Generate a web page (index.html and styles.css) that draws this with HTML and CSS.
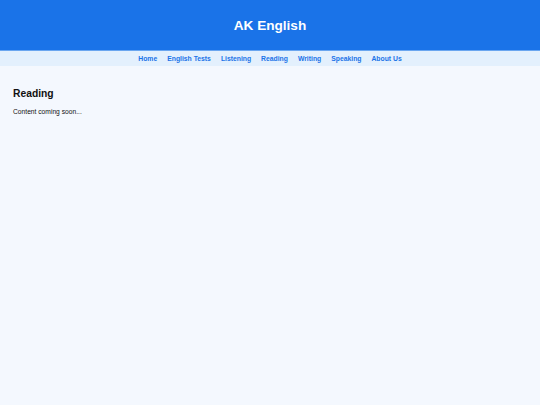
FILE: index.html
```html
<!DOCTYPE html>
<html lang="en">
<head>
<meta charset="utf-8">
<title>AK English</title>
<link rel="stylesheet" href="styles.css">
</head>
<body>
<header class="site-header">
  <h1 class="site-title">AK English</h1>
</header>
<nav class="site-nav">
  <a href="#">Home</a>
  <a href="#">English Tests</a>
  <a href="#">Listening</a>
  <a href="#">Reading</a>
  <a href="#">Writing</a>
  <a href="#">Speaking</a>
  <a href="#">About Us</a>
</nav>
<main class="content">
  <h2 class="page-title">Reading</h2>
  <p class="page-text">Content coming soon...</p>
</main>
</body>
</html>
```
FILE: styles.css
```css
html, body {
  margin: 0;
  padding: 0;
}
body {
  background: #f4f8fe;
  font-family: "Liberation Sans", Arial, sans-serif;
  color: #111;
  min-height: 405px;
}
.site-header {
  background: #1a73e8;
  height: 50px;
  display: flex;
  align-items: center;
  justify-content: center;
}
.site-title {
  margin: 0;
  color: #fff;
  font-size: 13.6px;
  font-weight: bold;
}
.site-nav {
  background: #e3f0fd;
  border-top: 1px solid #6aa6f0;
  height: 15px;
  display: flex;
  align-items: center;
  justify-content: center;
  gap: 10px;
}
.site-nav a {
  color: #1a73e8;
  text-decoration: none;
  font-weight: bold;
  font-size: 6.8px;
}
.content {
  padding: 22px 13px;
}
.page-title {
  margin: 0;
  font-size: 10.3px;
  font-weight: bold;
}
.page-text {
  margin: 9px 0 0;
  font-size: 6.7px;
}
```
